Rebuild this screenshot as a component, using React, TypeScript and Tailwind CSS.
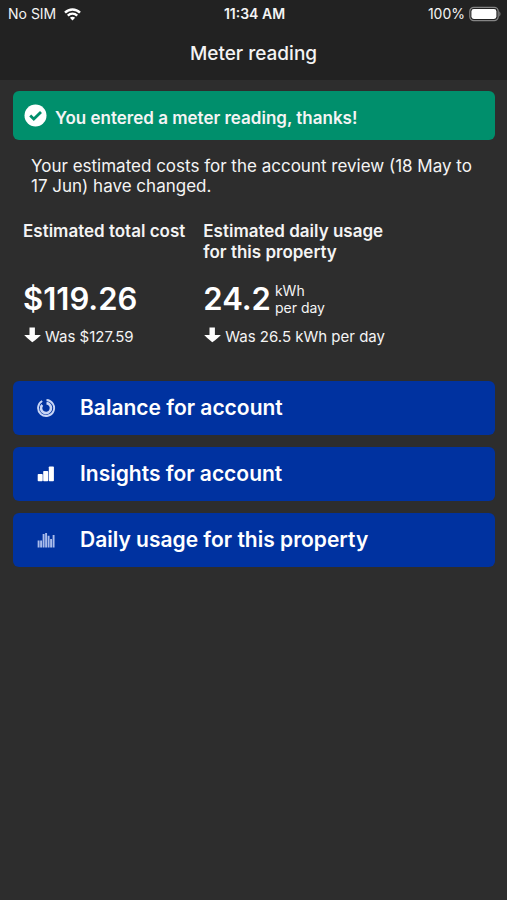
import React from 'react'

type IconName = 'balance' | 'insights' | 'usage'

interface LinkItem {
  label: string
  icon: IconName
}

const links: LinkItem[] = [
  { label: 'Balance for account', icon: 'balance' },
  { label: 'Insights for account', icon: 'insights' },
  { label: 'Daily usage for this property', icon: 'usage' },
]

function App() {
  return (
    <div className="min-h-screen bg-[#2d2d2d] font-['Inter',sans-serif] text-[#f4f4f4]">

      {/* HEADER */}
      <header className="bg-[#222222] pb-3">
        <StatusBar />
        <h1 className="mt-3 text-center text-[19px] leading-7 font-medium">Meter reading</h1>
      </header>

      <main className="pt-[11px] pr-3 pl-[13px]">

        {/* BANNER */}
        <div role="status" className="flex h-[49px] items-center gap-2 rounded-md bg-[#008f6c] px-[11px]">
          <CheckIcon />
          <p className="pt-1 text-[17px] leading-5 font-semibold">You entered a meter reading, thanks!</p>
        </div>

        <p className="mt-4 pr-2 pl-[18px] text-[17px] leading-5">
          Your estimated costs for the account review (18 May to 17 Jun) have changed.
        </p>

        {/* ESTIMATES */}
        <div className="mt-[25px] flex gap-[18px] px-[10px]">
          <Estimate title="Estimated total cost" value="$119.26" was="Was $127.59" />
          <Estimate
            title="Estimated daily usage for this property"
            value="24.2"
            unit={['kWh', 'per day']}
            was="Was 26.5 kWh per day"
          />
        </div>

        {/* LINKS */}
        <nav className="mt-[34px] flex flex-col gap-3">
          {links.map(link => (
            <button
              key={link.label}
              className="flex h-[54px] items-center gap-6 rounded-md bg-[#0032a0] px-[23px] text-left text-[21px] leading-7 font-semibold text-white"
            >
              <LinkIcon name={link.icon} />
              {link.label}
            </button>
          ))}
        </nav>
      </main>
    </div>
  )
}

export default App

/* ---------------- COMPONENTS ---------------- */

function StatusBar() {
  return (
    <div className="grid h-7 grid-cols-3 items-center pr-[6px] pl-2 text-sm">
      <div className="flex items-center gap-2">
        <span>No SIM</span>
        <svg width="17" height="13" viewBox="0 0 17 13" fill="none" stroke="white" strokeWidth="2.4" aria-hidden="true">
          <path d="M1 4.7C5.2.4 11.8.4 16 4.7" />
          <path d="M3.8 7.6c2.6-2.6 6.8-2.6 9.4 0" />
          <path d="M8.5 12.4 5.9 9.8c1.5-1.4 3.7-1.4 5.2 0z" fill="white" stroke="none" />
        </svg>
      </div>
      <span className="text-center font-semibold">11:34 AM</span>
      <div className="flex items-center justify-end gap-1">
        <span>100%</span>
        <svg width="32" height="16" viewBox="0 0 32 16" aria-hidden="true">
          <rect x="0.8" y="1.3" width="28.4" height="13.4" rx="4" fill="none" stroke="#858585" strokeWidth="1.2" />
          <rect x="2.4" y="3" width="25" height="10" rx="2.4" fill="white" />
          <path d="M30.3 5.6c1.5.6 1.5 4.2 0 4.8z" fill="#858585" />
        </svg>
      </div>
    </div>
  )
}

interface EstimateProps {
  title: string
  value: string
  unit?: string[]
  was: string
}

function Estimate({ title, value, unit, was }: EstimateProps) {
  return (
    <section className="max-w-[200px]">
      <h2 className="h-12 text-[17px] leading-[21px] font-semibold">{title}</h2>
      <div className="mt-3 flex h-9 items-center gap-1">
        <span className="text-[31px] leading-9 font-semibold text-white">{value}</span>
        {unit && (
          <span className="flex flex-col text-sm leading-[17px]">
            {unit.map(line => (
              <span key={line}>{line}</span>
            ))}
          </span>
        )}
      </div>
      <div className="mt-[10px] flex items-center gap-1 text-[15px] leading-5 whitespace-nowrap">
        <svg width="18" height="16" viewBox="0 0 18 16" fill="white" className="mb-1" aria-hidden="true">
          <path d="M6.5.5h5.4V8h6q-2.6 3-8.6 7.2Q3.8 11 1.2 8h5.3z" />
        </svg>
        <span>{was}</span>
      </div>
    </section>
  )
}

function CheckIcon() {
  return (
    <svg width="23" height="23" viewBox="0 0 23 23" aria-hidden="true">
      <circle cx="11.5" cy="11.5" r="11" fill="white" />
      <path d="m6.2 11.6 3.6 3.5 7.2-7" fill="none" stroke="#008f6c" strokeWidth="2.8" />
    </svg>
  )
}

function LinkIcon({ name }: { name: IconName }) {
  if (name === 'balance') {
    return (
      <svg width="20" height="20" viewBox="0 0 20 20" fill="none" stroke="#c9d6f5" aria-hidden="true">
        <path d="M10.5 5.1A5 5 0 1 1 6.2 6.8" strokeWidth="2.6" />
        <path d="M10.5 2A8 8 0 1 1 6.2 3" strokeWidth="1.9" />
      </svg>
    )
  }

  if (name === 'insights') {
    return (
      <svg width="20" height="20" viewBox="0 0 20 20" fill="white" aria-hidden="true">
        <rect x="1.7" y="10" width="5" height="7.3" rx="0.8" />
        <rect x="7.2" y="7" width="5" height="10.3" rx="0.8" />
        <rect x="12.8" y="2.5" width="5.1" height="14.8" rx="0.8" />
      </svg>
    )
  }

  return (
    <svg width="20" height="20" viewBox="0 0 20 20" stroke="#a9bceb" strokeWidth="1.9" aria-hidden="true">
      <path d="M2.6 17.5v-7M5.1 17.5v-7M7.6 17.5V4M10.1 17.5V3M12.6 17.5V5.8M15.1 17.5V9M17.6 17.5V5" />
    </svg>
  )
}
